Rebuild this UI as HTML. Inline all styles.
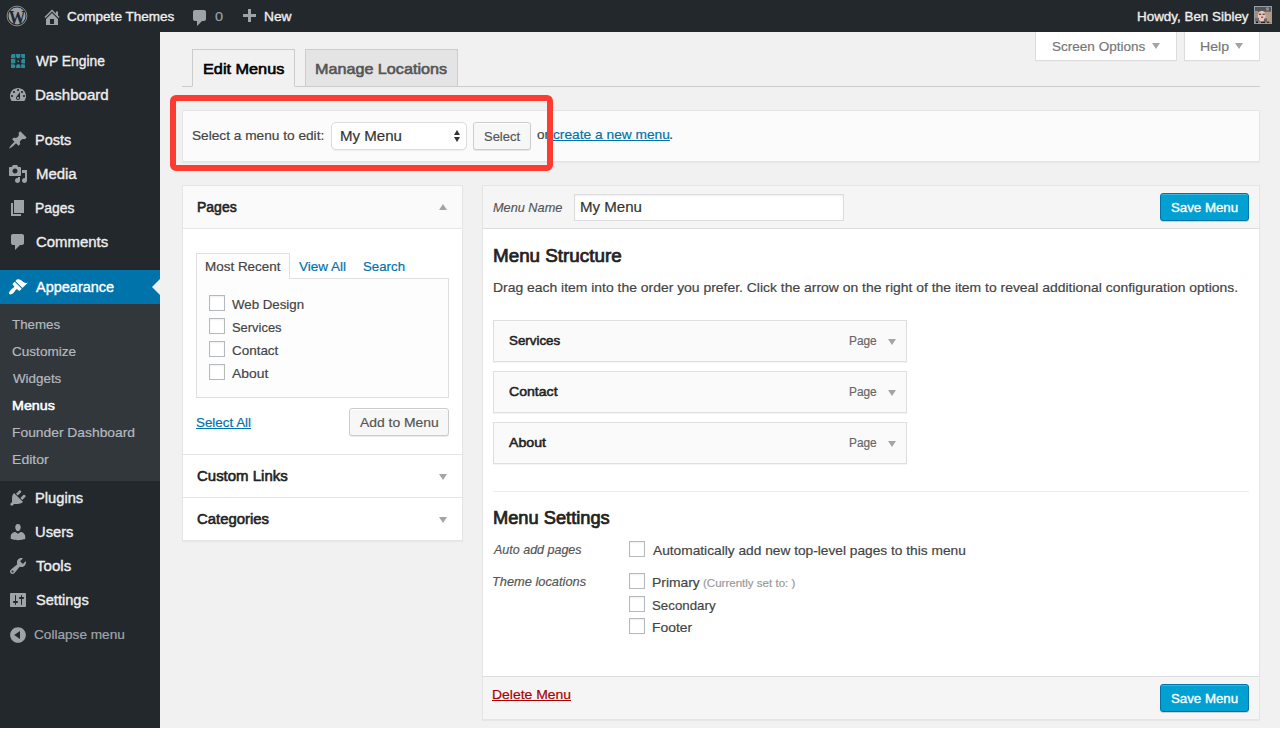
<!DOCTYPE html>
<html lang="en">
<head>
<meta charset="utf-8">
<title>Menus ‹ Compete Themes — WordPress</title>
<style>
html,body{margin:0;padding:0;}
body{width:1281px;height:729px;overflow:hidden;background:#fff;font-family:'Liberation Sans',sans-serif;font-size:13px;color:#444;}
#page{position:absolute;left:0;top:0;width:1280px;height:728px;background:#f1f1f1;overflow:hidden;}
.b{position:absolute;box-sizing:border-box;}
.t{position:absolute;white-space:pre;line-height:20px;transform-origin:0 50%;display:block;-webkit-text-stroke:.18px currentColor;}
.t.u{text-decoration:underline;text-decoration-thickness:1px;text-underline-offset:1px;}
.t.sw{-webkit-text-stroke:.35px currentColor;}
.t.sw2{-webkit-text-stroke:.2px currentColor;}
.t.sb{-webkit-text-stroke:.6px currentColor;}
.ic{position:absolute;display:block;}
#adminbar{left:0;top:0;width:1280px;height:32px;background:#23282d;}
#sidebar{left:0;top:32px;width:160px;height:696px;background:#23282d;}
#current{left:0;top:270px;width:160px;height:34px;background:#0073aa;}
#notch{left:152px;top:279px;width:0;height:0;border:8px solid transparent;border-right-color:#f1f1f1;border-left-width:0;}
#submenu{left:0;top:304px;width:160px;height:177px;background:#32373c;}
.meta{background:#fff;border:1px solid #ddd;border-top:none;top:32px;height:29px;box-shadow:0 1px 1px -1px rgba(0,0,0,.1);}
.tri-d{position:absolute;width:0;height:0;border-left:4px solid transparent;border-right:4px solid transparent;border-top:6px solid #a0a5aa;}
.tri-u{position:absolute;width:0;height:0;border-left:4px solid transparent;border-right:4px solid transparent;border-bottom:6px solid #a0a5aa;}
.panel{background:#fff;border:1px solid #e5e5e5;box-shadow:0 1px 1px rgba(0,0,0,.04);}
.btn{background:#f7f7f7;border:1px solid #ccc;border-radius:3px;box-shadow:inset 0 1px 0 #fff,0 1px 0 rgba(0,0,0,.08);}
.btnp{background:#00a0d2;border:1px solid #0073aa;border-radius:3px;box-shadow:inset 0 1px 0 rgba(120,200,230,.5),0 1px 0 rgba(0,0,0,.15);}
.cb{width:16px;height:16px;background:#fff;border:1px solid #b4b9be;box-shadow:inset 0 1px 2px rgba(0,0,0,.07);}
.item{left:493px;width:414px;height:42px;background:#fafafa;border:1px solid #dfdfdf;box-shadow:0 1px 1px rgba(0,0,0,.04);}
</style>
</head>
<body>
<div id="page">
  <div class="b" id="adminbar"></div>
  <div class="b" id="sidebar"></div>
  <div class="b" id="submenu"></div>
  <div class="b" id="current"></div>
  <div class="b" id="notch"></div>

  <!-- screen meta links -->
  <div class="b meta" style="left:1035px;width:142px;"></div>
  <div class="b meta" style="left:1184px;width:76px;"></div>
  <div class="tri-d" style="left:1152px;top:43px;"></div>
  <div class="tri-d" style="left:1235px;top:43px;"></div>

  <!-- nav tabs -->
  <div class="b" style="left:182px;top:86px;width:1078px;height:1px;background:#ccc;"></div>
  <div class="b" style="left:192px;top:49px;width:103px;height:38px;background:#f1f1f1;border:1px solid #ccc;border-bottom-color:#f1f1f1;"></div>
  <div class="b" style="left:305px;top:49px;width:153px;height:37px;background:#e4e4e4;border:1px solid #ccc;border-bottom:none;"></div>

  <!-- manage menus -->
  <div class="b panel" style="left:182px;top:110px;width:1078px;height:52px;background:#fbfbfb;"></div>
  <div class="b" style="left:331px;top:122px;width:136px;height:28px;background:#fff;border:1px solid #ddd;border-radius:5px;box-shadow:0 1px 1px rgba(0,0,0,.05);"></div>
  <div class="tri-u" style="left:454px;top:129.5px;border-bottom-color:#333;border-left-width:3.5px;border-right-width:3.5px;border-bottom-width:5px;"></div>
  <div class="tri-d" style="left:454px;top:137px;border-top-color:#333;border-left-width:3.5px;border-right-width:3.5px;border-top-width:5px;"></div>
  <div class="b btn" style="left:473px;top:122px;width:58px;height:28px;"></div>

  <!-- left accordion -->
  <div class="b panel" style="left:182px;top:185px;width:281px;height:356px;"></div>
  <div class="b" style="left:183px;top:186px;width:279px;height:43px;background:#fafafa;border-bottom:1px solid #e5e5e5;"></div>
  <div class="tri-u" style="left:439px;top:204px;"></div>
  <div class="b" style="left:196px;top:278px;width:253px;height:120px;background:#fdfdfd;border:1px solid #dfdfdf;"></div>
  <div class="b" style="left:196px;top:253px;width:94px;height:26px;background:#fdfdfd;border:1px solid #dfdfdf;border-bottom:none;"></div>
  <div class="b cb" style="left:209px;top:295px;"></div>
  <div class="b cb" style="left:209px;top:318px;"></div>
  <div class="b cb" style="left:209px;top:341px;"></div>
  <div class="b cb" style="left:209px;top:364px;"></div>
  <div class="b btn" style="left:349px;top:408px;width:100px;height:28px;"></div>
  <div class="b" style="left:183px;top:454px;width:279px;height:1px;background:#e5e5e5;"></div>
  <div class="b" style="left:183px;top:497px;width:279px;height:1px;background:#e5e5e5;"></div>
  <div class="tri-d" style="left:439px;top:474px;"></div>
  <div class="tri-d" style="left:439px;top:517px;"></div>

  <!-- right: menu management -->
  <div class="b panel" style="left:482px;top:185px;width:778px;height:535px;"></div>
  <div class="b" style="left:483px;top:186px;width:776px;height:43px;background:#f5f5f5;border-bottom:1px solid #ddd;"></div>
  <div class="b" style="left:483px;top:676px;width:776px;height:43px;background:#f5f5f5;border-top:1px solid #ddd;"></div>
  <div class="b" style="left:574px;top:194px;width:270px;height:27px;background:#fff;border:1px solid #ddd;box-shadow:inset 0 1px 2px rgba(0,0,0,.07);"></div>
  <div class="b btnp" style="left:1160px;top:193px;width:89px;height:28px;"></div>
  <div class="b btnp" style="left:1160px;top:684px;width:89px;height:28px;"></div>
  <div class="b item" style="top:320px;"></div>
  <div class="b item" style="top:371px;"></div>
  <div class="b item" style="top:422px;"></div>
  <div class="tri-d" style="left:888px;top:339px;"></div>
  <div class="tri-d" style="left:888px;top:390px;"></div>
  <div class="tri-d" style="left:888px;top:441px;"></div>
  <div class="b" style="left:493px;top:491px;width:756px;height:1px;background:#eee;"></div>
  <div class="b cb" style="left:629px;top:541px;"></div>
  <div class="b cb" style="left:629px;top:573px;"></div>
  <div class="b cb" style="left:629px;top:596px;"></div>
  <div class="b cb" style="left:629px;top:618px;"></div>

  <!-- annotation -->
  <div class="b" style="left:170px;top:95px;width:383px;height:76px;border:6px solid #fe3b30;border-radius:6px;z-index:5;"></div>

  <!-- avatar -->
  <svg class="ic" style="left:1254px;top:6px" width="18" height="18" viewBox="0 0 18 18">
    <rect width="18" height="18" fill="#989da3"/>
    <rect x="1" y="1" width="16" height="16" fill="#8f8677"/>
    <rect x="1" y="1" width="16" height="4.5" fill="#55565a"/>
    <rect x="12" y="1.5" width="3" height="3" fill="#8a8d92"/>
    <rect x="1" y="5" width="3" height="11" fill="#a58f73"/>
    <rect x="11.5" y="6" width="5.5" height="10" fill="#b49c7e"/>
    <rect x="12.5" y="8" width="3" height="5" fill="#a9a29a"/>
    <ellipse cx="7.8" cy="10" rx="3.9" ry="5.2" fill="#eac6bd"/>
    <rect x="5" y="7.6" width="2.2" height="1.4" fill="#6d4a3a"/>
    <rect x="8.6" y="7.6" width="2.2" height="1.4" fill="#6d4a3a"/>
    <rect x="7" y="10.6" width="2.2" height="1.3" fill="#7a5345"/>
    <rect x="1" y="12" width="4" height="3.5" fill="#6f7072"/>
    <rect x="10" y="12.5" width="3" height="3.5" fill="#67686b"/>
    <rect x="2" y="15.5" width="2" height="1.5" fill="#111"/>
    <rect x="7" y="15.8" width="4" height="1.2" fill="#1d1f22"/>
    <rect x="13" y="15.6" width="2.2" height="1.4" fill="#6b1c1c"/>
  </svg>

  <svg class="ic" style="left:10.8px;top:53.7px" width="14.5" height="14.5" viewBox="0 0 14.5 14.5" fill="#2b8c97">
    <polygon points="1.2,0 4.3,0 4.3,4.3 0,4.3 0,1.2"/>
    <polygon points="5.1,0 9.4,0 9.4,3.1 8.2,4.3 6.3,4.3 5.1,3.1"/>
    <polygon points="10.2,0 14.5,0 14.5,4.3 11.4,4.3 10.2,3.1"/>
    <polygon points="0,5.1 4.3,5.1 4.3,8.2 3.1,9.4 0,9.4"/>
    <rect x="6.4" y="6.4" width="1.7" height="1.7"/>
    <polygon points="11.4,5.1 14.5,5.1 14.5,9.4 11.4,9.4 10.2,8.2 10.2,6.3"/>
    <polygon points="0,10.2 3.1,10.2 4.3,11.4 4.3,13.3 3.1,14.5 0,14.5"/>
    <polygon points="6.3,10.2 8.2,10.2 9.4,11.4 9.4,14.5 5.1,14.5 5.1,11.4"/>
    <polygon points="10.2,10.2 13.3,10.2 14.5,11.4 14.5,14.5 10.2,14.5"/>
  </svg>
  <svg class="ic" style="left:6px;top:5px" width="22" height="22" viewBox="0 0 22 22">
    <circle cx="11" cy="11" r="9.9" fill="none" stroke="#9ea3a8" stroke-width=".8"/>
    <circle cx="11" cy="11" r="8.5" fill="#9ea3a8"/>
    <text x="0" y="0" transform="translate(11.1 18.7) scale(.9 1)" text-anchor="middle" font-family="'Liberation Serif',serif" font-weight="700" font-size="18.5" fill="#23282d">W</text>
  </svg>
<svg class="ic" style="left:42px;top:7px" width="20" height="20" viewBox="0 0 20 20"><path fill="#9ea3a8"  d="M16 8.5l1.53 1.53-1.06 1.06L10 4.62l-6.47 6.47-1.06-1.06L10 2.5l4 4v-2h2v4zm-6-2.46l6 5.99V18H4v-5.97zM12 17v-5H8v5h4z"/></svg>
<svg class="ic" style="left:189.5px;top:7.5px" width="20" height="20" viewBox="0 0 20 20"><path fill="#9ea3a8"  d="M5 2h9c1.1 0 2 .9 2 2v7c0 1.1-.9 2-2 2h-2l-5 5v-5H5c-1.1 0-2-.9-2-2V4c0-1.1.9-2 2-2z"/></svg>
<svg class="ic" style="left:239px;top:6.5px" width="20" height="20" viewBox="0 0 20 20"><path fill="#9ea3a8"  d="M17 7v3h-5v5H9v-5H4V7h5V2h3v5h5z"/></svg>
<svg class="ic" style="left:8px;top:85px" width="20" height="20" viewBox="0 0 20 20"><path fill="#9ea3a8"  d="M3.76 16h12.48c1.1-1.37 1.76-3.11 1.76-5 0-4.42-3.58-8-8-8s-8 3.580-8 8c0 1.890.660 3.630 1.760 5zM10 4c.55 0 1 .45 1 1s-.45 1-1 1-1-.45-1-1 .45-1 1-1zM6 6c.55 0 1 .45 1 1s-.45 1-1 1-1-.45-1-1 .45-1 1-1zm8 0c.55 0 1 .45 1 1s-.45 1-1 1-1-.45-1-1 .45-1 1-1zm-5.370 5.550L12 7v6c0 1.100-.900 2-2 2s-2-.900-2-2c0-.570.240-1.080.630-1.450zM4 10c.55 0 1 .45 1 1s-.45 1-1 1-1-.45-1-1 .45-1 1-1zm12 0c.55 0 1 .45 1 1s-.45 1-1 1-1-.45-1-1 .45-1 1-1zm-5 3c0-.55-.45-1-1-1s-1 .45-1 1 .45 1 1 1 1-.45 1-1z"/></svg>
<svg class="ic" style="left:8px;top:130px" width="20" height="20" viewBox="0 0 20 20"><path fill="#9ea3a8"  d="M10.44 3.02l1.82-1.82 6.36 6.35-1.83 1.82c-1.05-.68-2.48-.57-3.41.36l-.75.75c-.92.93-1.04 2.35-.35 3.41l-1.83 1.82-2.41-2.41-2.8 2.79c-.42.42-3.38 2.71-3.8 2.29s1.860-3.390 2.280-3.810l2.790-2.790L4.100 9.360l1.830-1.820c1.050.690 2.480.570 3.400-.360l.750-.750c.930-.920 1.050-2.350.360-3.410z"/></svg>
<svg class="ic" style="left:8px;top:164px" width="20" height="20" viewBox="0 0 20 20"><path fill="#9ea3a8"  d="M13 11V4c0-.55-.45-1-1-1h-1.670L9 1H5L3.670 3H2c-.55 0-1 .45-1 1v7c0 .55.45 1 1 1h10c.55 0 1-.45 1-1zM7 4.500c1.380 0 2.500 1.120 2.500 2.500S8.380 9.500 7 9.500 4.500 8.380 4.500 7 5.620 4.500 7 4.500zM14 6h5v10.500c0 1.380-1.120 2.500-2.500 2.500S14 17.880 14 16.500s1.120-2.500 2.500-2.500c.170 0 .340.020.500.050V9h-3V6zm-4 8.050V13h2v3.500c0 1.380-1.120 2.500-2.500 2.500S7 17.880 7 16.500 8.120 14 9.500 14c.170 0 .340.020.500.050z"/></svg>
<svg class="ic" style="left:8px;top:198px" width="20" height="20" viewBox="0 0 20 20"><path fill="#9ea3a8"  d="M6 15V2h10v13H6zm-1 1h8v2H3V5h2v11z"/></svg>
<svg class="ic" style="left:8px;top:232px" width="20" height="20" viewBox="0 0 20 20"><path fill="#9ea3a8"  d="M5 2h9c1.1 0 2 .9 2 2v7c0 1.1-.9 2-2 2h-2l-5 5v-5H5c-1.1 0-2-.9-2-2V4c0-1.1.9-2 2-2z"/></svg>
<svg class="ic" style="left:8px;top:277px" width="20" height="20" viewBox="0 0 20 20"><path fill="#fff"  d="M14.480 11.060L7.410 3.990l1.500-1.500c.500-.560 2.300-.470 3.510.320 1.210.800 1.430 1.280 2.910 2.100 1.180.640 2.450 1.260 4.450.850zm-.710.710L6.700 4.700 4.930 6.470c-.390.390-.390 1.020 0 1.410l1.060 1.060c.390.390.390 1.030 0 1.420-.600.600-1.430 1.110-2.210 1.690-.350.260-.700.530-1.010.840C1.430 14.230.400 16.080 1.400 17.070c.990 1 2.840-.030 4.180-1.360.310-.310.580-.660.850-1.020.570-.780 1.080-1.610 1.690-2.210.390-.390 1.020-.390 1.410 0l1.060 1.060c.390.390 1.020.390 1.410 0z"/></svg>
<svg class="ic" style="left:8px;top:488px" width="20" height="20" viewBox="0 0 20 20"><path fill="#9ea3a8"  d="M13.110 4.360L9.870 7.600 8 5.730l3.240-3.240c.350-.340 1.050-.200 1.560.320.520.510.660 1.210.310 1.550zm-8 1.770l.910-1.120 9.010 9.010-1.190.840c-.710.710-2.630 1.160-3.820 1.160H6.140L4.900 17.260c-.590.590-1.540.590-2.120 0-.590-.580-.590-1.530 0-2.120l1.240-1.240v-3.880c0-1.130.400-3.190 1.090-3.890zm7.260 3.970l3.240-3.240c.340-.350 1.040-.210 1.550.310.520.510.660 1.210.310 1.550l-3.240 3.250z"/></svg>
<svg class="ic" style="left:8px;top:522px" width="20" height="20" viewBox="0 0 20 20"><path fill="#9ea3a8"  d="M10 9.250c-2.270 0-2.730-3.440-2.730-3.440C7 4.020 7.820 2 9.970 2c2.160 0 2.980 2.020 2.710 3.810 0 0-.410 3.440-2.680 3.440zm0 2.570L12.720 10c2.390 0 4.520 2.330 4.520 4.530v2.490s-3.650 1.130-7.240 1.130c-3.650 0-7.240-1.130-7.240-1.130v-2.490c0-2.250 1.940-4.480 4.470-4.480z"/></svg>
<svg class="ic" style="left:8px;top:556px" width="20" height="20" viewBox="0 0 20 20"><path fill="#9ea3a8"  d="M16.680 9.770c-1.340 1.340-3.300 1.670-4.950.990l-5.410 6.520c-.990.990-2.590.990-3.580 0s-.990-2.590 0-3.570l6.520-5.420c-.680-1.650-.350-3.610.990-4.950 1.280-1.280 3.120-1.620 4.720-1.060l-2.890 2.890 2.820 2.820 2.860-2.870c.530 1.580.180 3.390-1.080 4.650zM3.810 16.210c.400.390 1.040.390 1.430 0 .400-.400.400-1.040 0-1.430-.390-.400-1.030-.400-1.430 0-.390.390-.390 1.030 0 1.430z"/></svg>
<svg class="ic" style="left:8px;top:590px" width="20" height="20" viewBox="0 0 20 20"><path fill="#9ea3a8"  d="M18 16V4c0-.55-.45-1-1-1H3c-.55 0-1 .45-1 1v12c0 .55.45 1 1 1h14c.55 0 1-.45 1-1zM8 11h1c.55 0 1 .45 1 1s-.45 1-1 1H8v1.500c0 .280-.220.500-.500.500s-.500-.220-.500-.500V13H6c-.55 0-1-.45-1-1s.45-1 1-1h1V5.500c0-.280.220-.500.500-.500s.500.220.500.500V11zm5-2h-1c-.55 0-1-.45-1-1s.45-1 1-1h1V5.500c0-.280.220-.500.500-.500s.500.220.500.500V7h1c.55 0 1 .45 1 1s-.45 1-1 1h-1v5.500c0 .280-.220.500-.500.500s-.500-.220-.500-.500V9z"/></svg>
<svg class="ic" style="left:8px;top:624.5px" width="20" height="20" viewBox="0 0 20 20"><path fill="#9ea3a8"  d="M10 2.160c4.330 0 7.840 3.510 7.840 7.840s-3.510 7.840-7.840 7.840S2.160 14.330 2.160 10 5.670 2.160 10 2.160zm2 11.720V6.120L6.180 9.970z"/></svg>
<span class="t sw" style="left:67.22px;top:6.50px;font-size:13px;color:#eee;transform:scaleX(1.0409);">Compete Themes</span>
<span class="t" style="left:215.22px;top:7.00px;font-size:13px;color:#9ea3a8;transform:scaleX(1.1141);">0</span>
<span class="t sw" style="left:264.22px;top:6.50px;font-size:13px;color:#eee;transform:scaleX(1.0594);">New</span>
<span class="t sw" style="left:1136.72px;top:6.50px;font-size:13px;color:#eee;transform:scaleX(1.0315);">Howdy, Ben Sibley</span>
<span class="t sw" style="left:36.41px;top:51.00px;font-size:14px;color:#eee;transform:scaleX(0.9878);">WP Engine</span>
<span class="t sw" style="left:34.91px;top:85.00px;font-size:14px;color:#eee;transform:scaleX(1.0756);">Dashboard</span>
<span class="t sw" style="left:34.91px;top:130.00px;font-size:14px;color:#eee;transform:scaleX(1.0333);">Posts</span>
<span class="t sw" style="left:35.91px;top:164.00px;font-size:14px;color:#eee;transform:scaleX(1.0666);">Media</span>
<span class="t sw" style="left:34.91px;top:198.00px;font-size:14px;color:#eee;transform:scaleX(0.9931);">Pages</span>
<span class="t sw" style="left:35.91px;top:232.00px;font-size:14px;color:#eee;transform:scaleX(1.0664);">Comments</span>
<span class="t sw" style="left:36.41px;top:277.00px;font-size:14px;color:#fff;transform:scaleX(1.0353);">Appearance</span>
<span class="t sw2" style="left:12.22px;top:315.25px;font-size:13px;color:#b4b9be;transform:scaleX(1.0232);">Themes</span>
<span class="t sw2" style="left:11.72px;top:342.00px;font-size:13px;color:#b4b9be;transform:scaleX(1.0430);">Customize</span>
<span class="t sw2" style="left:12.72px;top:369.00px;font-size:13px;color:#b4b9be;transform:scaleX(1.0286);">Widgets</span>
<span class="t" style="left:12.22px;top:396.00px;font-size:13px;color:#fff;transform:scaleX(1.0968);-webkit-text-stroke:0.52px currentColor;">Menus</span>
<span class="t sw2" style="left:11.72px;top:423.00px;font-size:13px;color:#b4b9be;transform:scaleX(1.0642);">Founder Dashboard</span>
<span class="t sw2" style="left:11.72px;top:450.00px;font-size:13px;color:#b4b9be;transform:scaleX(1.0836);">Editor</span>
<span class="t sw" style="left:34.91px;top:487.50px;font-size:14px;color:#eee;transform:scaleX(1.0492);">Plugins</span>
<span class="t sw" style="left:34.91px;top:521.50px;font-size:14px;color:#eee;transform:scaleX(1.0511);">Users</span>
<span class="t sw" style="left:35.91px;top:555.50px;font-size:14px;color:#eee;transform:scaleX(1.0763);">Tools</span>
<span class="t sw" style="left:35.91px;top:589.50px;font-size:14px;color:#eee;transform:scaleX(1.0412);">Settings</span>
<span class="t sw2" style="left:33.97px;top:625.00px;font-size:13px;color:#a0a5aa;transform:scaleX(1.0472);">Collapse menu</span>
<span class="t" style="left:202.65px;top:58.80px;font-size:15px;color:#000;transform:scaleX(1.0833);-webkit-text-stroke:0.60px currentColor;">Edit Menus</span>
<span class="t" style="left:314.65px;top:58.80px;font-size:15px;color:#555;transform:scaleX(1.0771);-webkit-text-stroke:0.60px currentColor;">Manage Locations</span>
<span class="t" style="left:1051.72px;top:37.00px;font-size:13px;color:#777;transform:scaleX(1.0413);">Screen Options</span>
<span class="t" style="left:1199.72px;top:37.00px;font-size:13px;color:#777;transform:scaleX(1.0864);">Help</span>
<span class="t" style="left:192.22px;top:125.50px;font-size:13px;color:#444;transform:scaleX(1.0518);">Select a menu to edit:</span>
<span class="t" style="left:339.66px;top:125.50px;font-size:14px;color:#333;transform:scaleX(1.0756);">My Menu</span>
<span class="t" style="left:483.72px;top:127.00px;font-size:13px;color:#555;transform:scaleX(0.9978);">Select</span>
<span class="t" style="left:536.72px;top:125.00px;font-size:13px;color:#444;transform:scaleX(1.0430);">or</span>
<span class="t u" style="left:552.80px;top:125.00px;font-size:13px;color:#0073aa;transform:scaleX(1.0574);">create a new menu</span>
<span class="t" style="left:669.42px;top:125.00px;font-size:13px;color:#444;transform:scaleX(1.1614);">.</span>
<span class="t" style="left:197.16px;top:196.50px;font-size:14px;color:#222;transform:scaleX(0.9994);-webkit-text-stroke:0.56px currentColor;">Pages</span>
<span class="t" style="left:204.72px;top:257.00px;font-size:13px;color:#444;transform:scaleX(1.0353);">Most Recent</span>
<span class="t" style="left:298.92px;top:257.00px;font-size:13px;color:#0073aa;transform:scaleX(1.0389);">View All</span>
<span class="t" style="left:363.47px;top:257.00px;font-size:13px;color:#0073aa;transform:scaleX(1.0208);">Search</span>
<span class="t" style="left:231.72px;top:294.50px;font-size:13px;color:#444;transform:scaleX(1.0210);">Web Design</span>
<span class="t" style="left:231.72px;top:317.50px;font-size:13px;color:#444;transform:scaleX(0.9940);">Services</span>
<span class="t" style="left:231.72px;top:340.50px;font-size:13px;color:#444;transform:scaleX(1.0334);">Contact</span>
<span class="t" style="left:231.72px;top:363.50px;font-size:13px;color:#444;transform:scaleX(1.0684);">About</span>
<span class="t u" style="left:195.97px;top:412.50px;font-size:13px;color:#0073aa;transform:scaleX(1.0295);">Select All</span>
<span class="t" style="left:360.22px;top:412.50px;font-size:13px;color:#555;transform:scaleX(1.0691);">Add to Menu</span>
<span class="t" style="left:196.66px;top:466.00px;font-size:14px;color:#222;transform:scaleX(1.0692);-webkit-text-stroke:0.56px currentColor;">Custom Links</span>
<span class="t" style="left:196.66px;top:509.00px;font-size:14px;color:#222;transform:scaleX(1.0624);-webkit-text-stroke:0.56px currentColor;">Categories</span>
<span class="t" style="left:492.97px;top:197.50px;font-size:13px;color:#555;transform:scaleX(0.9788);font-style:italic;">Menu Name</span>
<span class="t" style="left:579.66px;top:197.00px;font-size:14px;color:#333;transform:scaleX(1.0756);">My Menu</span>
<span class="t sw" style="left:1171.22px;top:198.00px;font-size:13px;color:#fff;transform:scaleX(1.0197);">Save Menu</span>
<span class="t" style="left:492.67px;top:243.00px;font-size:18px;color:#222;transform:scaleX(1.0455);line-height:26px;-webkit-text-stroke:0.72px currentColor;">Menu Structure</span>
<span class="t" style="left:492.92px;top:277.50px;font-size:13px;color:#444;transform:scaleX(1.0707);">Drag each item into the order you prefer. Click the arrow on the right of the item to reveal additional configuration options.</span>
<span class="t" style="left:509.47px;top:331.15px;font-size:13px;color:#222;transform:scaleX(1.0261);-webkit-text-stroke:0.52px currentColor;">Services</span>
<span class="t" style="left:508.97px;top:382.00px;font-size:13px;color:#222;transform:scaleX(1.0836);-webkit-text-stroke:0.52px currentColor;">Contact</span>
<span class="t" style="left:508.97px;top:433.00px;font-size:13px;color:#222;transform:scaleX(1.0905);-webkit-text-stroke:0.52px currentColor;">About</span>
<span class="t" style="left:848.53px;top:331.00px;font-size:12px;color:#666;transform:scaleX(0.9878);">Page</span>
<span class="t" style="left:848.53px;top:382.00px;font-size:12px;color:#666;transform:scaleX(0.9878);">Page</span>
<span class="t" style="left:848.53px;top:433.00px;font-size:12px;color:#666;transform:scaleX(0.9878);">Page</span>
<span class="t" style="left:493.02px;top:505.30px;font-size:18px;color:#222;transform:scaleX(1.0146);line-height:26px;-webkit-text-stroke:0.72px currentColor;">Menu Settings</span>
<span class="t" style="left:493.72px;top:539.50px;font-size:13px;color:#555;transform:scaleX(0.9614);font-style:italic;">Auto add pages</span>
<span class="t" style="left:653.22px;top:540.50px;font-size:13px;color:#444;transform:scaleX(1.0558);">Automatically add new top-level pages to this menu</span>
<span class="t" style="left:492.22px;top:571.50px;font-size:13px;color:#555;transform:scaleX(0.9861);font-style:italic;">Theme locations</span>
<span class="t" style="left:652.22px;top:573.25px;font-size:13px;color:#444;transform:scaleX(1.0676);">Primary</span>
<span class="t" style="left:703.14px;top:572.50px;font-size:11px;color:#999;transform:scaleX(1.0487);">(Currently set to: )</span>
<span class="t" style="left:652.22px;top:595.50px;font-size:13px;color:#444;transform:scaleX(1.0226);">Secondary</span>
<span class="t" style="left:652.22px;top:617.50px;font-size:13px;color:#444;transform:scaleX(1.0660);">Footer</span>
<span class="t u" style="left:491.97px;top:684.50px;font-size:13px;color:#a00;transform:scaleX(1.0725);">Delete Menu</span>
<span class="t sw" style="left:1171.22px;top:689.00px;font-size:13px;color:#fff;transform:scaleX(1.0197);">Save Menu</span>
</div>
</body>
</html>
